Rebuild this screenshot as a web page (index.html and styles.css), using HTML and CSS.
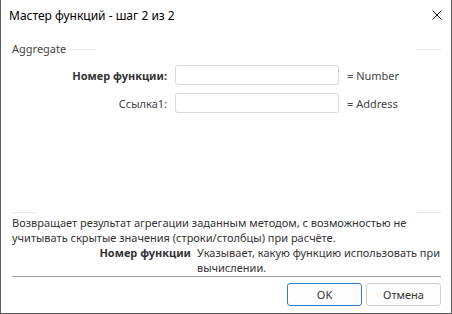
FILE: index.html
```html
<!DOCTYPE html>
<html lang="ru">
<head>
  <meta charset="UTF-8" />
  <meta name="viewport" content="width=device-width, initial-scale=1" />
  <title>Мастер функций</title>
  <link rel="stylesheet" href="styles.css">
</head>
<body>

  <div class="dialog">
    <div class="titlebar">
      <span class="title">Мастер функций - шаг 2 из 2</span>
      <svg class="close" width="10" height="10" viewBox="0 0 10 10">
        <path d="M0.5 0.5 L9.5 9.5 M9.5 0.5 L0.5 9.5" stroke="#1a1a1a" stroke-width="1" fill="none" />
      </svg>
    </div>

    <div class="content">
      <div class="group">
        <div class="group-head">
          <span class="group-title">Aggregate</span>
          <span class="edge edge-after"></span>
          <span class="spacer"></span>
          <span class="edge"></span>
        </div>

        <div class="args">
          <div class="arg">
            <label class="arg-name bold">Номер функции:</label>
            <input class="arg-input" type="text" />
            <span class="arg-value">= Number</span>
          </div>
          <div class="arg">
            <label class="arg-name">Ссылка1:</label>
            <input class="arg-input" type="text" />
            <span class="arg-value">= Address</span>
          </div>
        </div>

        <div class="group-foot">
          <span class="edge"></span>
          <span class="spacer"></span>
          <span class="edge"></span>
        </div>
      </div>

      <p class="desc">Возвращает результат агрегации заданным методом, с возможностью не<br>учитывать скрытые значения (строки/столбцы) при расчёте.</p>

      <div class="param">
        <span class="param-name">Номер функции</span>
        <span class="param-text">Указывает, какую функцию использовать при<br>вычислении.</span>
      </div>

      <div class="sep"></div>

      <div class="buttons">
        <button class="btn btn-default">OK</button>
        <button class="btn">Отмена</button>
      </div>
    </div>
  </div>

</body>
</html>
```

FILE: styles.css
```css
* { box-sizing: border-box; margin: 0; padding: 0; }

body {
  font-family: 'Noto Sans', 'Liberation Sans', sans-serif;
  font-size: 11px;
  color: #333;
  background: #fff;
}

.dialog {
  width: 452px;
  height: 314px;
  border: 1px solid #5c5c5c;
  border-top: none;
  background: #fff;
  display: flex;
  flex-direction: column;
}

.titlebar {
  height: 30px;
  padding: 0 9px 0 8px;
  display: flex;
  align-items: center;
  justify-content: space-between;
}

.title {
  font-size: 12px;
  color: #000;
  margin-top: 1px;
}

.close {
  display: block;
}

.content {
  padding: 0 10px 0 11px;
  display: flex;
  flex-direction: column;
}

.group {
  margin-top: 12px;
  height: 171px;
  display: flex;
  flex-direction: column;
}

.group-head,
.group-foot {
  display: flex;
  align-items: center;
}

.group-head {
  height: 14px;
}

.group-title {
  color: #444;
  line-height: 14px;
}

.edge {
  width: 24px;
  height: 1px;
  background: #e6e6e6;
}

.edge-after {
  margin-left: 6px;
}

.spacer {
  flex: 1;
}

.group-foot {
  margin-top: auto;
  height: 1px;
}

.args {
  margin-top: 9px;
  display: flex;
  flex-direction: column;
  gap: 8px;
}

.arg {
  display: flex;
  align-items: center;
  height: 20px;
}

.arg-name {
  width: 155px;
  text-align: right;
  color: #444;
}

.bold {
  font-weight: bold;
  color: #333;
}

.arg-input {
  width: 164px;
  height: 20px;
  margin-left: 8px;
  border: 1px solid #d9d9d9;
  border-radius: 3px;
  background: #fff;
  font: inherit;
}

.arg-value {
  margin-left: 8px;
  color: #444;
}

.desc {
  margin-top: 2px;
  line-height: 15px;
  color: #333;
}

.param {
  display: grid;
  grid-template-columns: 179px 1fr;
  column-gap: 6px;
  line-height: 15px;
}

.param-name {
  text-align: right;
  font-weight: bold;
  color: #333;
}

.sep {
  margin-top: 1px;
  height: 1px;
  background: #a0a0a0;
}

.buttons {
  margin-top: 6px;
  display: flex;
  justify-content: flex-end;
  gap: 4px;
}

.btn {
  width: 75px;
  height: 23px;
  border: 1px solid #d0d0d0;
  border-radius: 3px;
  background: #fdfdfd;
  font: inherit;
  font-size: 11px;
  color: #333;
}

.btn-default {
  border-color: #2b7fcf;
}
```
